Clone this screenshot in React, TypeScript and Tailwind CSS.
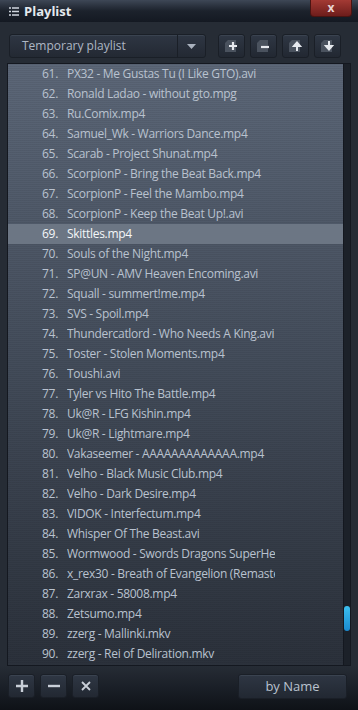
import React from "react";

const items: string[] = [
  "PX32 - Me Gustas Tu (I Like GTO).avi",
  "Ronald Ladao - without gto.mpg",
  "Ru.Comix.mp4",
  "Samuel_Wk - Warriors Dance.mp4",
  "Scarab - Project Shunat.mp4",
  "ScorpionP - Bring the Beat Back.mp4",
  "ScorpionP - Feel the Mambo.mp4",
  "ScorpionP - Keep the Beat Up!.avi",
  "Skittles.mp4",
  "Souls of the Night.mp4",
  "SP@UN - AMV Heaven Encoming.avi",
  "Squall - summert!me.mp4",
  "SVS - Spoil.mp4",
  "Thundercatlord - Who Needs A King.avi",
  "Toster - Stolen Moments.mp4",
  "Toushi.avi",
  "Tyler vs Hito The Battle.mp4",
  "Uk@R - LFG Kishin.mp4",
  "Uk@R - Lightmare.mp4",
  "Vakaseemer - AAAAAAAAAAAAA.mp4",
  "Velho - Black Music Club.mp4",
  "Velho - Dark Desire.mp4",
  "VIDOK - Interfectum.mp4",
  "Whisper Of The Beast.avi",
  "Wormwood - Swords Dragons  SuperHeroes.mp4",
  "x_rex30 - Breath of Evangelion (Remastered).mp4",
  "Zarxrax - 58008.mp4",
  "Zetsumo.mp4",
  "zzerg - Mallinki.mkv",
  "zzerg - Rei of Deliration.mkv",
];

function SquareBtn({ children }: { children: React.ReactNode }) {
  return (
    <div className="w-[27px] h-[24px] rounded-[3px] bg-gradient-to-b from-[#2f3744] to-[#222832] border border-[#1a1f27] shadow-[inset_0_1px_0_#3a4350] flex items-center justify-center">
      {children}
    </div>
  );
}

function PageIcon({ kind }: { kind: "plus" | "minus" | "up" | "down" }) {
  return (
    <svg width="16" height="14" viewBox="0 0 16 14">
      <path d="M4 1h8v12H1V4z" fill="#4a525e" />
      {kind === "plus" && <path d="M9 3v8M5 7h8" stroke="#e6e9ee" strokeWidth="2.2" />}
      {kind === "minus" && <path d="M5 8h8" stroke="#e6e9ee" strokeWidth="2.2" />}
      {kind === "up" && <path d="M9 12V6M6 7l3-3.5L12 7z" stroke="#e6e9ee" strokeWidth="2" fill="#e6e9ee" />}
      {kind === "down" && <path d="M9 2v6M6 7l3 3.5L12 7z" stroke="#e6e9ee" strokeWidth="2" fill="#e6e9ee" />}
    </svg>
  );
}

export default function App() {
  return (
    <div
      className="w-[358px] h-[710px] bg-[#262c35] flex flex-col overflow-hidden text-[#b9c2cf]"
      style={{ fontFamily: "'Open Sans', 'Noto Sans', sans-serif" }}
    >
      {/* title bar */}
      <div className="h-[22px] shrink-0 flex items-start bg-gradient-to-b from-[#3e4756] via-[#1c222c] to-[#141922]">
        <div className="flex items-center gap-[5px] pl-[9px] h-[22px]">
          <svg width="10" height="9" viewBox="0 0 10 9">
            <path d="M0 1h2M3 1h7M0 4.5h2M3 4.5h7M0 8h2M3 8h7" stroke="#cfd5de" strokeWidth="1.4" />
          </svg>
          <span className="text-[13px] font-bold text-[#e4e8ee] leading-none">Playlist</span>
        </div>
        <div className="ml-auto mr-[6px] w-[42px] h-[17px] rounded-b-[4px] bg-gradient-to-b from-[#a33a34] to-[#6e1d1b] border border-[#4a1412] border-t-0 flex items-center justify-center">
          <span className="text-[12px] font-bold text-[#e8d5d3] leading-none">x</span>
        </div>
      </div>

      {/* toolbar */}
      <div className="shrink-0 flex items-center gap-[5px] pl-[9px] mt-[12px] h-[24px]">
        <div className="w-[197px] h-[24px] rounded-[3px] bg-gradient-to-b from-[#2e3643] to-[#232933] border border-[#1a1f27] shadow-[inset_0_1px_0_#3a4350] flex items-center">
          <span className="pl-[12px] text-[12px] text-[#aeb7c4] flex-1">Temporary playlist</span>
          <div className="w-[1px] h-[22px] bg-[#1a1f27]" />
          <div className="w-[27px] flex items-center justify-center">
            <svg width="9" height="5" viewBox="0 0 9 5">
              <path d="M0 0h9L4.5 5z" fill="#aab2be" />
            </svg>
          </div>
        </div>
        <div className="w-[2px]" />
        <SquareBtn><PageIcon kind="plus" /></SquareBtn>
        <SquareBtn><PageIcon kind="minus" /></SquareBtn>
        <SquareBtn><PageIcon kind="up" /></SquareBtn>
        <SquareBtn><PageIcon kind="down" /></SquareBtn>
      </div>

      {/* list */}
      <div className="shrink-0 mx-[7px] mt-[5px] h-[603px] border border-[#141820] flex relative">
        <div className="flex-1 flex flex-col bg-gradient-to-b from-[#5c6778] via-[#434c5a] to-[#2b313b]">
          {items.map((t, i) => {
            const sel = i === 8;
            return (
              <div
                key={i}
                className={
                  "h-[20px] shrink-0 flex items-center text-[12px] tracking-[-0.3px] " +
                  (sel ? "bg-[#6c7684] text-[#f4f6f9]" : "")
                }
                style={{
                  backgroundImage: sel
                    ? undefined
                    : "repeating-linear-gradient(to bottom, rgba(0,0,0,0.06) 0 1px, transparent 1px 2px)",
                }}
              >
                <span className="w-[50px] text-right">{61 + i}.</span>
                <span className="ml-[9px] w-[208px] whitespace-nowrap overflow-hidden">{t}</span>
              </div>
            );
          })}
        </div>
        <div className="w-[7px] bg-[#1c2129] border-l border-[#141820] relative">
          <div className="absolute left-[0px] top-[542px] w-[6px] h-[25px] rounded-[3px] bg-gradient-to-b from-[#3cc0f0] to-[#1a8ad0]" />
        </div>
      </div>

      {/* bottom */}
      <div className="flex-1 flex items-start pt-[8px] pl-[8px] pr-[11px] bg-gradient-to-b from-[#262c35] via-[#1a1f27] to-[#0f1217]">
        <div className="flex gap-[5px]">
          <SquareBtn>
            <svg width="14" height="14" viewBox="0 0 14 14"><path d="M7 1v12M1 7h12" stroke="#c9cfd8" strokeWidth="2.4" /></svg>
          </SquareBtn>
          <SquareBtn>
            <svg width="14" height="14" viewBox="0 0 14 14"><path d="M1 7h12" stroke="#c9cfd8" strokeWidth="2.4" /></svg>
          </SquareBtn>
          <SquareBtn>
            <svg width="12" height="12" viewBox="0 0 12 12"><path d="M2 2l8 8M10 2l-8 8" stroke="#c9cfd8" strokeWidth="1.8" /></svg>
          </SquareBtn>
        </div>
        <div className="ml-auto w-[109px] h-[25px] rounded-[3px] bg-gradient-to-b from-[#2e3643] to-[#222832] border border-[#1a1f27] shadow-[inset_0_1px_0_#3a4350] flex items-center justify-center">
          <span className="text-[13px] text-[#b9c2cf]">by Name</span>
        </div>
      </div>
    </div>
  );
}
